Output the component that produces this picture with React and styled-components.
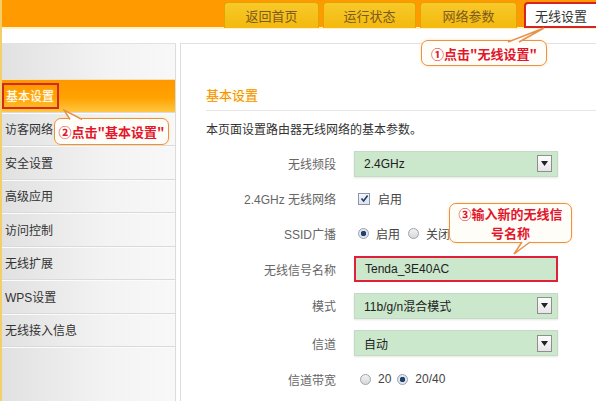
import React from 'react';
import styled, { createGlobalStyle } from 'styled-components';

const GlobalStyle = createGlobalStyle`
  html, body {
    margin: 0;
    padding: 0;
    background: #ffffff;
  }
  * {
    box-sizing: border-box;
  }
  body {
    font-family: "Liberation Sans", "Noto Sans CJK SC", sans-serif;
    font-size: 12px;
    color: #333;
  }
`;

const tabs = [
    { label: '返回首页', w: 95 },
    { label: '运行状态', w: 93 },
    { label: '网络参数', w: 97 },
    { label: '无线设置', w: 80, active: true },
];
const menu = ['基本设置', '访客网络', '安全设置', '高级应用', '访问控制', '无线扩展', 'WPS设置', '无线接入信息'];

const Arrow = () => (
    <svg width="7" height="5" viewBox="0 0 7 5">
        <path d="M0 0 L7 0 L3.5 5 Z" fill="#222" />
    </svg>
);

const Select = ({ value }) => (
    <Field>
        <span>{value}</span>
        <DropBtn><Arrow /></DropBtn>
    </Field>
);

const App = () => {
    return (
        <Page>
            <GlobalStyle />
            <Header>
                {tabs.map(t => (
                    <Tab key={t.label} w={t.w} active={t.active}>{t.label}</Tab>
                ))}
            </Header>
            <Main>
                <Sidebar>
                    <MenuList>
                        {menu.map((m, i) => (
                            <MenuItem key={m} active={i === 0}>
                                {i === 0 ? <Marked>{m}</Marked> : m}
                            </MenuItem>
                        ))}
                    </MenuList>
                </Sidebar>
                <Content>
                    <Heading>基本设置</Heading>
                    <Desc>本页面设置路由器无线网络的基本参数。</Desc>
                    <Form>
                        <Row h={35}>
                            <Label>无线频段</Label>
                            <Select value="2.4GHz" />
                        </Row>
                        <Row h={35}>
                            <Label>2.4GHz 无线网络</Label>
                            <Choice>
                                <Check>
                                    <svg width="9" height="9" viewBox="0 0 9 9">
                                        <path d="M1.5 4.5 L3.6 7 L7.6 1.5" stroke="#1d3a6a" strokeWidth="1.6" fill="none" />
                                    </svg>
                                </Check>
                                <span>启用</span>
                            </Choice>
                        </Row>
                        <Row h={35}>
                            <Label>SSID广播</Label>
                            <Choice>
                                <Radio on /><span>启用</span>
                                <Radio /><span>关闭</span>
                            </Choice>
                        </Row>
                        <Row h={36}>
                            <Label>无线信号名称</Label>
                            <Field highlight>Tenda_3E40AC</Field>
                        </Row>
                        <Row h={37}>
                            <Label>模式</Label>
                            <Select value="11b/g/n混合模式" />
                        </Row>
                        <Row h={38}>
                            <Label>信道</Label>
                            <Select value="自动" />
                        </Row>
                        <Row h={34}>
                            <Label>信道带宽</Label>
                            <Choice>
                                <Radio /><span>20</span>
                                <Radio on /><span>20/40</span>
                            </Choice>
                        </Row>
                    </Form>
                </Content>
            </Main>

            <Callout style={{ left: 419, top: 40, width: 126, height: 26 }}>
                <span>①点击"无线设置"</span>
            </Callout>
            <Tail style={{ left: 500, top: 26 }} width="44" height="17" viewBox="0 0 44 17">
                <path d="M6 16 L42 2 L17 16" fill="#fff" stroke="#e8914a" strokeWidth="1.5" />
            </Tail>

            <Callout style={{ left: 52, top: 118, width: 115, height: 27 }}>
                <span>②点击"基本设置"</span>
            </Callout>
            <Tail style={{ left: 60, top: 109 }} width="24" height="11" viewBox="0 0 24 11">
                <path d="M8 10.5 L2 1 L20 10.5" fill="#fff" stroke="#e8914a" strokeWidth="1.5" />
            </Tail>

            <Callout style={{ left: 447, top: 203, width: 123, height: 40 }}>
                <CalloutLine>③输入新的无线信</CalloutLine>
                <CalloutLine>号名称</CalloutLine>
            </Callout>
            <Tail style={{ left: 508, top: 241 }} width="24" height="15" viewBox="0 0 24 15">
                <path d="M12 1 L4 13 L20 1" fill="#fff" stroke="#e8914a" strokeWidth="1.5" />
            </Tail>
        </Page>
    );
};

const Page = styled.div`
  position: relative;
  width: 596px;
  height: 401px;
  overflow: hidden;
  border-left: 2px solid #f3cf6a;
`;

const Header = styled.div`
  height: 29px;
  background: #ff9a00;
  border-bottom: 2px solid #fff3c4;
  display: flex;
  align-items: flex-end;
  gap: 4px;
  padding-left: 222px;
`;

const Tab = styled.div`
  flex: none;
  width: ${p => p.w}px;
  height: 26px;
  margin-bottom: -1px;
  margin-left: ${p => (p.active ? '3px' : '0')};
  border-radius: 4px 4px 0 0;
  display: flex;
  align-items: center;
  justify-content: center;
  font-size: 13px;
  background: ${p => (p.active ? '#ffffff' : 'linear-gradient(#f8c92a, #f3b90e)')};
  color: ${p => (p.active ? '#333' : '#7d5b1c')};
  border: ${p => (p.active ? '2px solid #d62424' : '1px solid #e2a400')};
  border-bottom: ${p => (p.active ? '2px solid #d62424' : 'none')};
  padding-right: ${p => (p.active ? '6px' : '0')};
`;

const Main = styled.div`
  display: flex;
  gap: 4px;
  margin-top: 14px;
  height: 360px;
`;

const Sidebar = styled.div`
  width: 174px;
  background: linear-gradient(to right, #e1e1e1, #f3f3f3 60%, #f8f8f8);
  border-top: 1px solid #e2e2e2;
  border-right: 1px solid #dcdcdc;
  padding-top: 35px;
`;

const MenuList = styled.div`
  display: flex;
  flex-direction: column;
`;

const MenuItem = styled.div`
  height: 33.5px;
  display: flex;
  align-items: center;
  padding-left: ${p => (p.active ? '0' : '3px')};
  font-size: 12px;
  color: ${p => (p.active ? '#fff' : '#333')};
  border-top: ${p => (p.active ? '1px solid #f0e2c0' : 'none')};
  border-bottom: 1px solid #dadada;
  box-shadow: 0 1px 0 #fbfbfb;
  background: ${p => (p.active ? 'linear-gradient(#ff9800, #ffa200 55%, #ffc640)' : 'transparent')};
`;

const Marked = styled.span`
  display: flex;
  align-items: center;
  height: 26px;
  width: 57px;
  padding-left: 2px;
  border: 2px solid #d42a1e;
  text-shadow: 0 0 2px #ffd36a;
`;

const Content = styled.div`
  flex: 1;
  border-top: 1px solid #e2e2e2;
  border-left: 1px solid #dcdcdc;
  padding: 42px 0 0 25px;
`;

const Heading = styled.div`
  font-size: 13px;
  line-height: 20px;
  color: #f29100;
  text-shadow: 0 0 3px #ffe9a0;
  padding-bottom: 4px;
  border-bottom: 1px solid #e6e6e6;
`;

const Desc = styled.div`
  margin-top: 10px;
  line-height: 18px;
  font-size: 12px;
  color: #333;
`;

const Form = styled.div`
  margin-top: 7px;
  display: flex;
  flex-direction: column;
`;

const Row = styled.div`
  height: ${p => p.h}px;
  display: grid;
  grid-template-columns: 130px 204px;
  column-gap: 18px;
  align-items: center;
`;

const Label = styled.div`
  text-align: right;
  color: #666;
  font-size: 12px;
`;

const Field = styled.div`
  height: 26px;
  display: flex;
  align-items: center;
  justify-content: space-between;
  padding: 0 5px 0 9px;
  background: #cbe7cc;
  border: ${p => (p.highlight ? '2px solid #e0203a' : '1px solid #c6d8c6')};
  box-shadow: ${p => (p.highlight ? 'none' : '0 1px 2px #dfe8df')};
  font-size: 12px;
  color: #222;
`;

const DropBtn = styled.div`
  width: 15px;
  height: 17px;
  border: 1px solid #8f8f8f;
  background: linear-gradient(#fdfdfd, #e8e4ea);
  display: flex;
  align-items: center;
  justify-content: center;
`;

const Choice = styled.div`
  display: flex;
  align-items: center;
  gap: 6px;
  padding-left: 4px;
  color: #444;
  font-size: 12px;
`;

const Check = styled.span`
  width: 12px;
  height: 12px;
  border: 1px solid #8b96a8;
  background: linear-gradient(#f4f6fa, #dde3ec);
  display: inline-flex;
  align-items: center;
  justify-content: center;
  margin-right: 2px;
`;

const Radio = styled.span`
  width: 11px;
  height: 11px;
  border-radius: 50%;
  border: 1px solid #9aa3ae;
  background: ${p => (p.on
        ? 'radial-gradient(circle, #23406e 0 2.5px, #dfe6ee 3px)'
        : 'linear-gradient(#f2f2f2, #d8d8d8)')};
  margin-right: 1px;
  margin-left: ${p => (p.on ? '0' : '2px')};
`;

const Callout = styled.div`
  position: absolute;
  display: flex;
  flex-direction: column;
  align-items: center;
  justify-content: center;
  text-align: center;
  background: #fffdf8;
  border: 1.5px solid #e8914a;
  border-radius: 7px;
  box-shadow: 0 0 3px #ffe0a8;
  color: #e2162c;
  font-weight: bold;
  font-size: 13px;
  line-height: 19px;
  font-family: "Noto Sans CJK SC", sans-serif;
  z-index: 2;
`;

const CalloutLine = styled.span`
  display: block;
  white-space: nowrap;
`;

const Tail = styled.svg`
  position: absolute;
  z-index: 3;
`;

export default App;
